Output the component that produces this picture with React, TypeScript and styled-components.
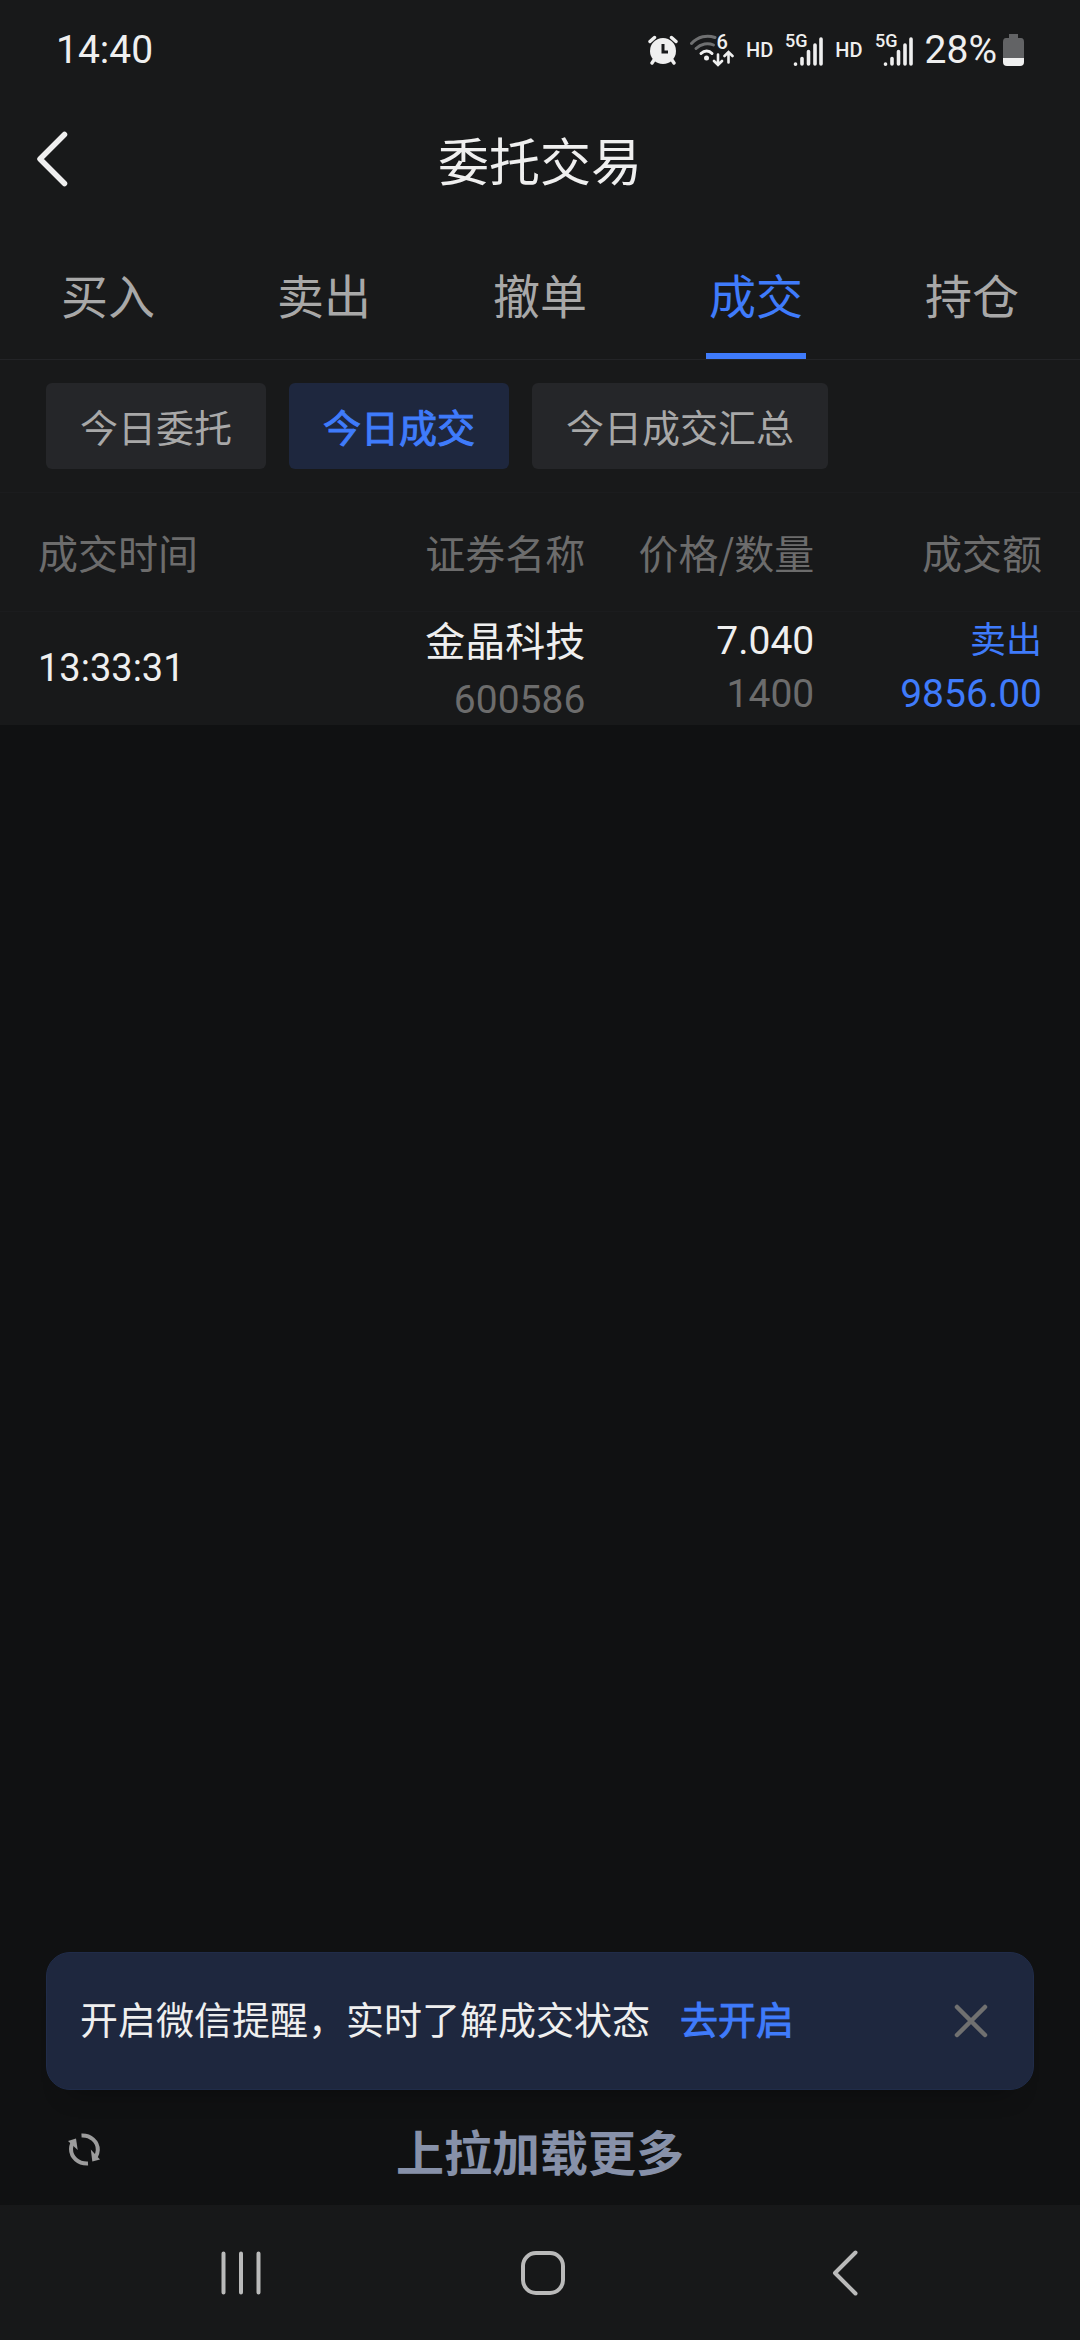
import React, { useState } from "react";
import styled, { createGlobalStyle, css } from "styled-components";

const color = {
  panel: "#18191a",
  page: "#101112",
  nav: "#171819",
  line: "#232427",
  faintLine: "#1b1c1e",
  text: "#efefef",
  muted: "#a8a8a8",
  dim: "#6c6c6c",
  blue: "#3f7bfb",
  chip: "#252629",
  chipActive: "#1e273e",
};

const cjk = `"Noto Sans CJK SC", Roboto, sans-serif`;
const latin = `Roboto, "Noto Sans CJK SC", sans-serif`;

const GlobalStyle = createGlobalStyle`
  * { box-sizing: border-box; }
  body { margin: 0; background: ${color.page}; }
  button { margin: 0; padding: 0; border: 0; background: none; color: inherit; font: inherit; cursor: pointer; }
  svg { display: block; flex: none; }
`;

const Screen = styled.div`
  min-height: 100vh;
  display: flex;
  flex-direction: column;
  background: ${color.page};
  color: ${color.text};
  font-family: ${cjk};
`;

const StatusBar = styled.div`
  height: 86px;
  padding: 14px 56px 0;
  display: flex;
  align-items: center;
  justify-content: space-between;
  background: ${color.panel};
  font: 400 39px/48px ${latin};
`;

const StatusIcons = styled.div`
  display: flex;
  align-items: center;
  gap: 12px;
`;

const HdLabel = styled.span`
  font-size: 20px;
  font-weight: 500;
  line-height: 24px;
`;

const Battery = styled.span`
  display: flex;
  align-items: center;
  gap: 6px;
`;

const Header = styled.header`
  height: 146px;
  padding: 0 32px;
  display: grid;
  grid-template-columns: 48px 1fr 48px;
  align-items: center;
  background: ${color.panel};
`;

const Title = styled.h1`
  margin: 0;
  text-align: center;
  font-size: 51px;
  font-weight: 400;
  line-height: 72px;
`;

const Tabs = styled.nav`
  display: grid;
  grid-template-columns: repeat(5, 1fr);
  justify-items: center;
  background: ${color.panel};
  border-bottom: 1px solid ${color.line};
`;

const Tab = styled.button<{ $active: boolean }>`
  width: 100px;
  height: 127px;
  padding-bottom: 4px;
  white-space: nowrap;
  font-size: 47px;
  line-height: 68px;
  color: ${(p) => (p.$active ? color.blue : color.muted)};
  box-shadow: ${(p) => (p.$active ? `inset 0 -6px ${color.blue}` : "none")};
`;

const Chips = styled.div`
  padding: 23px 46px;
  display: flex;
  gap: 23px;
  background: ${color.panel};
  border-bottom: 1px solid ${color.faintLine};
`;

const emphasis = css`
  color: ${color.blue};
  -webkit-text-stroke: 1px ${color.blue};
`;

const Chip = styled.button<{ $active: boolean }>`
  height: 86px;
  padding: 0 34px;
  border-radius: 6px;
  white-space: nowrap;
  font-size: 38px;
  line-height: 56px;
  background: ${(p) => (p.$active ? color.chipActive : color.chip)};
  color: ${color.muted};
  ${(p) => p.$active && emphasis}
`;

const Trades = styled.table`
  width: 100%;
  table-layout: fixed;
  border-collapse: collapse;
  background: ${color.panel};
`;

const Col = styled.col<{ $width: string }>`
  width: ${(p) => p.$width};
`;

const cell = css`
  padding: 0;
  text-align: right;
  &:first-child { padding-left: 38px; text-align: left; }
  &:last-child { padding-right: 38px; }
`;

const HeadCell = styled.th`
  ${cell}
  height: 118px;
  border-bottom: 1px solid ${color.faintLine};
  font-size: 40px;
  font-weight: 400;
  line-height: 56px;
  white-space: nowrap;
  color: ${color.dim};
`;

const DataCell = styled.td<{ $tone?: string }>`
  ${cell}
  height: 113px;
  font: 400 39px/53px ${latin};
  color: ${(p) => p.$tone ?? color.text};
`;

const Line = styled.div<{ $size?: number; $tone?: string }>`
  font-size: ${(p) => p.$size ?? 39}px;
  color: ${(p) => p.$tone ?? "inherit"};
`;

const NameStack = styled.div`
  padding-top: 4px;
  line-height: 54px;

  & > :last-child {
    padding-top: 5px;
    line-height: 50px;
  }
`;

const Empty = styled.main`
  flex: 1;
`;

const Notice = styled.aside`
  margin: 0 46px;
  height: 138px;
  padding: 0 33px;
  display: flex;
  align-items: center;
  gap: 30px;
  border: 1px solid #202c49;
  border-radius: 24px;
  background: ${color.chipActive};
  box-shadow: 0 24px 24px -24px rgba(0, 0, 0, 0.4);
  font: 400 38px/56px ${latin};
`;

const NoticeLink = styled.a`
  ${emphasis}
  text-decoration: none;
`;

const CloseButton = styled.button`
  margin-left: auto;
  padding: 12px;
`;

const LoadBar = styled.div`
  height: 115px;
  padding: 4px 68px 0;
  display: grid;
  grid-template-columns: 32px 1fr 32px;
  align-items: center;
`;

const LoadMore = styled.button`
  font-size: 48px;
  font-weight: 700;
  line-height: 72px;
  color: #8791a9;
`;

const SystemNav = styled.nav`
  height: 135px;
  padding: 0 84px 0 90px;
  display: grid;
  grid-template-columns: repeat(3, 1fr);
  align-items: center;
  justify-items: center;
  background: ${color.nav};
`;

const NavButton = styled.button`
  padding: 16px 40px;
`;

const AlarmIcon = () => (
  <svg width="30" height="30" viewBox="0 0 30 30" aria-hidden="true">
    <circle cx="15" cy="16" r="13" fill="#efefef" />
    <path d="M2 6.500 6.500 2.500M28 6.500 23.500 2.500M6 25 4 28M24 25 26 28" stroke="#efefef" strokeWidth="3.400" strokeLinecap="round" />
    <path d="M15 9V17H20" fill="none" stroke="#18191b" strokeWidth="3" />
  </svg>
);

const WifiIcon = () => (
  <svg width="44" height="40" viewBox="0 -3 44 40" aria-hidden="true">
    <g fill="none" strokeWidth="3" strokeLinecap="round">
      <path d="M1.500 10.500C8 3.500 17 1.500 25 4.500" stroke="#6f7071" />
      <path d="M6 15.500C11 10.500 18 9.500 23.500 12" stroke="#6f7071" />
      <path d="M11 20.500C14.500 17 19 17 22 20.500" stroke="#efefef" />
      <path d="M28 21.500V31M24 28 28 32 32 28M38.500 29.500V20M34.500 23 38.500 19 42.500 23" stroke="#efefef" strokeWidth="2.600" />
    </g>
    <circle cx="16.500" cy="25" r="2.500" fill="#efefef" />
    <text x="26.500" y="16" fill="#efefef" fontFamily="Roboto" fontSize="20" fontWeight="500">6</text>
  </svg>
);

const SignalIcon = () => (
  <svg width="38" height="40" viewBox="0 -3 38 40" aria-hidden="true">
    <text x="0" y="14" fill="#efefef" fontFamily="Roboto" fontSize="18" fontWeight="500">5G</text>
    <path d="M10.500 31V31.200M17 31V25.500M23.500 31V18.500M30 31V12M36 31V6" stroke="#efefef" strokeWidth="3.600" strokeLinecap="round" />
  </svg>
);

const BatteryIcon = () => (
  <svg width="21" height="32" viewBox="0 0 21 32" aria-hidden="true">
    <path d="M6 0H15V4H18Q21 4 21 8V24H0V8Q0 4 3 4H6Z" fill="#626365" />
    <path d="M0 24H21V28Q21 32 17 32H4Q0 32 0 28Z" fill="#efefef" />
  </svg>
);

const BackIcon = () => (
  <svg width="40" height="58" viewBox="0 0 40 58" aria-hidden="true">
    <path d="M32.500 4.500 8 29 32.500 53.500" fill="none" stroke="#efefef" strokeWidth="5.500" strokeLinecap="round" strokeLinejoin="round" />
  </svg>
);

const CloseIcon = () => (
  <svg width="34" height="34" viewBox="0 0 34 34" aria-hidden="true">
    <path d="M3 3 31 31M31 3 3 31" stroke="#707070" strokeWidth="4.500" strokeLinecap="round" />
  </svg>
);

const RefreshIcon = () => (
  <svg width="32" height="33" viewBox="0 0 32 33" aria-hidden="true">
    <g fill="none" stroke="#9c9c9c" strokeWidth="4">
      <path d="M13.500 2.500C22.500 2 30 8.500 29.800 17C29.700 19 29.200 21 28 23.500" />
      <path d="M20 30.500C10 31 3 24 3 16C3 14 3.500 12 4.500 9.500" />
    </g>
    <path d="M22.800 16.500 32 26.500 24.300 28.500Z" fill="#9c9c9c" />
    <path d="M9.700 17 0 8 8 5.500Z" fill="#9c9c9c" />
  </svg>
);

const RecentsIcon = () => (
  <svg width="40" height="44" viewBox="0 0 40 44" aria-hidden="true">
    <path d="M2.500 2.500V41.500M20 2.500V41.500M37.500 2.500V41.500" stroke="#bababa" strokeWidth="4" strokeLinecap="round" />
  </svg>
);

const HomeIcon = () => (
  <svg width="44" height="44" viewBox="0 0 44 44" aria-hidden="true">
    <rect x="2" y="2" width="40" height="40" rx="13" fill="none" stroke="#bababa" strokeWidth="4" />
  </svg>
);

const NavBackIcon = () => (
  <svg width="26" height="46" viewBox="0 0 26 46" aria-hidden="true">
    <path d="M23.500 2.500 3 23 23.500 43.500" fill="none" stroke="#bababa" strokeWidth="4" strokeLinecap="round" strokeLinejoin="round" />
  </svg>
);

const tabs = ["买入", "卖出", "撤单", "成交", "持仓"];
const filters = ["今日委托", "今日成交", "今日成交汇总"];
const trades = [
  { time: "13:33:31", name: "金晶科技", code: "600586", price: "7.040", count: "1400", side: "卖出", amount: "9856.00" },
];

export default function App() {
  const [tab, setTab] = useState("成交");
  const [filter, setFilter] = useState("今日成交");
  const [noticeOpen, setNoticeOpen] = useState(true);

  return (
    <Screen lang="zh-CN">
      <GlobalStyle />
      <StatusBar>
        <span>14:40</span>
        <StatusIcons>
          <AlarmIcon />
          <WifiIcon />
          <HdLabel>HD</HdLabel>
          <SignalIcon />
          <HdLabel>HD</HdLabel>
          <SignalIcon />
          <Battery>
            28%
            <BatteryIcon />
          </Battery>
        </StatusIcons>
      </StatusBar>

      <Header>
        <button type="button" aria-label="返回">
          <BackIcon />
        </button>
        <Title>委托交易</Title>
      </Header>

      <Tabs>
        {tabs.map((name) => (
          <Tab key={name} type="button" $active={name === tab} onClick={() => setTab(name)}>
            {name}
          </Tab>
        ))}
      </Tabs>

      <Chips>
        {filters.map((name) => (
          <Chip key={name} type="button" $active={name === filter} onClick={() => setFilter(name)}>
            {name}
          </Chip>
        ))}
      </Chips>

      <Trades>
        <colgroup>
          <Col $width="27%" />
          <Col $width="27.2%" />
          <Col $width="21.2%" />
          <Col $width="24.6%" />
        </colgroup>
        <thead>
          <tr>
            <HeadCell scope="col">成交时间</HeadCell>
            <HeadCell scope="col">证券名称</HeadCell>
            <HeadCell scope="col">价格/数量</HeadCell>
            <HeadCell scope="col">成交额</HeadCell>
          </tr>
        </thead>
        <tbody>
          {trades.map((t) => (
            <tr key={t.time + t.code}>
              <DataCell>
                <Line $size={38}>{t.time}</Line>
              </DataCell>
              <DataCell>
                <NameStack>
                  <Line $size={40}>{t.name}</Line>
                  <Line $tone={color.dim}>{t.code}</Line>
                </NameStack>
              </DataCell>
              <DataCell>
                <Line>{t.price}</Line>
                <Line $tone={color.dim}>{t.count}</Line>
              </DataCell>
              <DataCell $tone={color.blue}>
                <Line $size={36}>{t.side}</Line>
                <Line>{t.amount}</Line>
              </DataCell>
            </tr>
          ))}
        </tbody>
      </Trades>

      <Empty />

      {noticeOpen && (
        <Notice>
          <span>开启微信提醒，实时了解成交状态</span>
          <NoticeLink href="#wechat">去开启</NoticeLink>
          <CloseButton type="button" aria-label="关闭" onClick={() => setNoticeOpen(false)}>
            <CloseIcon />
          </CloseButton>
        </Notice>
      )}

      <LoadBar>
        <button type="button" aria-label="刷新">
          <RefreshIcon />
        </button>
        <LoadMore type="button">上拉加载更多</LoadMore>
      </LoadBar>

      <SystemNav>
        <NavButton type="button" aria-label="最近任务">
          <RecentsIcon />
        </NavButton>
        <NavButton type="button" aria-label="主屏幕">
          <HomeIcon />
        </NavButton>
        <NavButton type="button" aria-label="后退">
          <NavBackIcon />
        </NavButton>
      </SystemNav>
    </Screen>
  );
}
